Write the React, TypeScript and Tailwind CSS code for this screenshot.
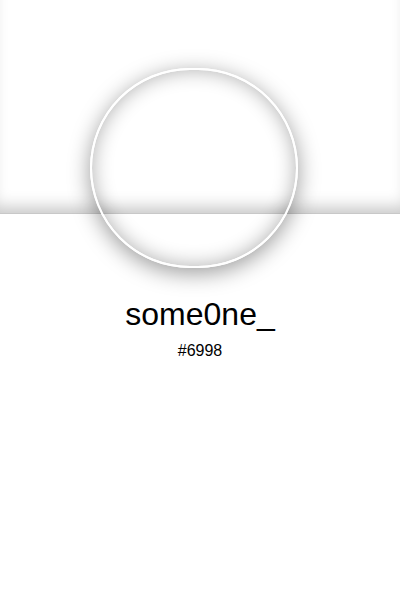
export default function App() {
  return (
    <div className="min-h-[600px] w-[400px] bg-white font-['Liberation_Sans',Arial,sans-serif] text-black">
      {/* Header band */}
      <div className="h-[214px] border-b border-[#c8c8c8] bg-white shadow-[inset_0_-14px_16px_-8px_rgba(0,0,0,0.22)]" />

      {/* Avatar ring */}
      <div className="relative mt-[-146px] ml-[90px] h-[200px] w-[208px] rounded-full border-2 border-white shadow-[0_5px_22px_rgba(0,0,0,0.4),inset_0_0_20px_rgba(0,0,0,0.32)]" />

      {/* Name */}
      <div className="mt-[30px] flex flex-col items-center">
        <h1 className="text-[32px] leading-[32px] font-normal">some0ne_</h1>
        <p className="mt-[13px] text-[16px] leading-[16px]">#6998</p>
      </div>
    </div>
  );
}
